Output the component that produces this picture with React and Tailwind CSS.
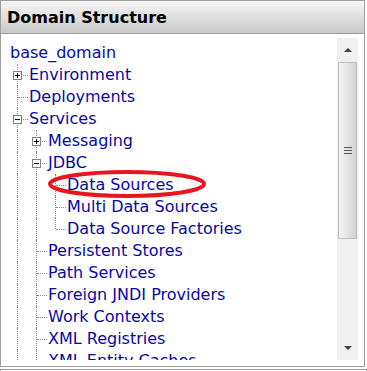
import React from 'react';

const tree = {
  label: 'base_domain',
  children: [
    { label: 'Environment', collapsed: true },
    { label: 'Deployments' },
    {
      label: 'Services',
      children: [
        { label: 'Messaging', collapsed: true },
        {
          label: 'JDBC',
          children: [
            { label: 'Data Sources' },
            { label: 'Multi Data Sources' },
            { label: 'Data Source Factories' },
          ],
        },
        { label: 'Persistent Stores' },
        { label: 'Path Services' },
        { label: 'Foreign JNDI Providers' },
        { label: 'Work Contexts' },
        { label: 'XML Registries' },
        { label: 'XML Entity Caches' },
        { label: 'jCOM' },
        { label: 'Mail Sessions' },
      ],
    },
    { label: 'Security Realms' },
    { label: 'Interoperability', collapsed: true },
    { label: 'Diagnostics', collapsed: true },
  ],
};

// flatten the tree into rows with guide info
const flatten = (node, guides, out) => {
  node.children?.forEach((child, i) => {
    const last = i === node.children.length - 1;
    out.push({ ...child, guides, last });
    if (child.children) flatten(child, [...guides, !last], out);
  });
  return out;
};

const rows = flatten(tree, [], []).slice(0, 14);

const Expander = ({ open }) => (
  <div className="absolute left-[3px] top-[7px] w-[9px] h-[9px] border border-[#808080] bg-white">
    <div className="absolute left-[1px] top-[3px] w-[5px] h-px bg-black" />
    {!open && <div className="absolute left-[3px] top-[1px] w-px h-[5px] bg-black" />}
  </div>
);

const Row = ({ row }) => {
  const hasBox = row.collapsed || row.children;
  return (
    <div className="flex h-[22px] items-center">
      {row.guides.map((g, i) => (
        <div key={i} className="relative w-[19px] h-full shrink-0">
          {g && <div className="absolute left-[7px] top-0 bottom-0 border-l border-dotted border-[#8a8a8a]" />}
        </div>
      ))}
      <div className="relative w-[19px] h-full shrink-0">
        <div
          className={`absolute left-[7px] top-0 border-l border-dotted border-[#8a8a8a] ${row.last ? 'h-[11px]' : 'bottom-0'}`}
        />
        <div className="absolute left-[8px] right-[1px] top-[11px] border-t border-dotted border-[#8a8a8a]" />
        {hasBox && <Expander open={!!row.children} />}
      </div>
      <span className="whitespace-nowrap">{row.label}</span>
    </div>
  );
};

const ScrollBar = () => (
  <div className="w-[21px] mt-[4px] mb-[6px] flex flex-col bg-[#f0f0f0] shrink-0">
    <div className="h-[24px] flex items-center justify-center bg-[#f0f0f0]">
      <div className="w-0 h-0 border-l-[4px] border-r-[4px] border-b-[4px] border-l-transparent border-r-transparent border-b-[#404040]" />
    </div>
    <div className="h-[177px] mx-px border border-[#bdbdbd] bg-gradient-to-r from-[#f4f4f4] via-[#e4e4e4] to-[#d2d2d2] flex flex-col items-center justify-center gap-[2px]">
      <div className="w-[8px] h-px bg-[#555]" />
      <div className="w-[8px] h-px bg-[#555]" />
      <div className="w-[8px] h-px bg-[#555]" />
    </div>
    <div className="flex-1" />
    <div className="h-[24px] flex items-center justify-center">
      <div className="w-0 h-0 border-l-[4px] border-r-[4px] border-t-[4px] border-l-transparent border-r-transparent border-t-[#404040]" />
    </div>
  </div>
);

export default function App() {
  return (
    <div className="relative w-[367px] h-[371px] bg-white overflow-hidden font-['DejaVu_Sans',sans-serif]">
      <div className="w-[365px] h-[367px] border border-[#9e9e9e] flex flex-col">
        <div className="h-[33px] shrink-0 border-b border-[#9e9e9e] bg-gradient-to-b from-[#f6f6f6] to-[#c9c9c9] flex items-center pl-[6px] pt-[2px]">
          <h2 className="text-[16px] font-bold text-black leading-none">Domain Structure</h2>
        </div>
        <div className="flex-1 flex min-h-0">
          <div className="flex-1 overflow-hidden pt-[8px] pl-[9px] mb-[6px] text-[16px] text-[#0808a6] leading-none">
            <div className="h-[22px] flex items-center">{tree.label}</div>
            {rows.map((r) => (
              <Row key={r.label} row={r} />
            ))}
          </div>
          <ScrollBar />
          <div className="w-[6px] shrink-0" />
        </div>
      </div>
      <div className="mt-[2px] h-[10px] border border-[#9e9e9e]" />
      <svg className="absolute left-0 top-0 pointer-events-none" width="367" height="371">
        <ellipse cx="127" cy="184" rx="77" ry="12" fill="none" stroke="#e8141e" strokeWidth="4" />
      </svg>
    </div>
  );
}
